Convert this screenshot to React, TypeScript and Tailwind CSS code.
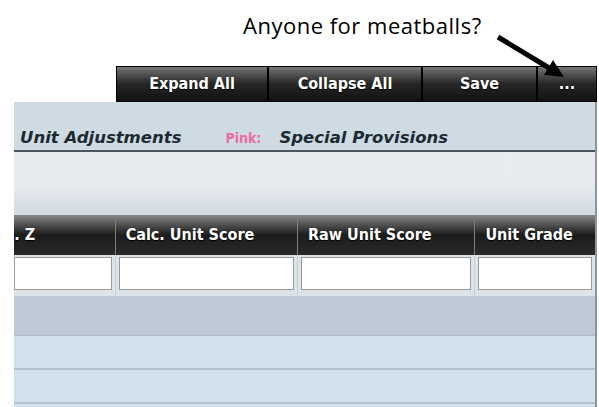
const toolbar = [
  { label: "Expand All", w: "w-[152px]" },
  { label: "Collapse All", w: "w-[154px]" },
  { label: "Save", w: "w-[115px]" },
  { label: "...", w: "w-[60px]" },
];

const columns = [
  { label: "Avg. Z", w: "w-[101px]", clip: true },
  { label: "Calc. Unit Score", w: "w-[183px]" },
  { label: "Raw Unit Score", w: "w-[178px]" },
  { label: "Unit Grade", w: "w-[121px]" },
];

const cond = "font-['DejaVu_Sans_Condensed','DejaVu_Sans',sans-serif] font-stretch-condensed";

function Pointer() {
  // thick black arrow aimed at the overflow button
  return (
    <svg className="pointer-events-none absolute left-0 top-0" width="599" height="100" viewBox="0 0 599 100">
      <line x1="498" y1="37" x2="550" y2="68.5" stroke="#000" strokeWidth="5" />
      <polygon points="564,77 544,75 553,60" fill="#000" />
    </svg>
  );
}

export default function App() {
  return (
    <div className="relative h-[407px] w-[599px] overflow-hidden bg-white">
      <div className="h-[66px] pl-[243px] pt-[9px]">
        <span className="font-['Open_Sans',sans-serif] text-[22px] tracking-[0.5px] text-black">Anyone for meatballs?</span>
      </div>

      <div className="flex h-[36px] pl-[116px]">
        {toolbar.map((b) => (
          <div
            key={b.label}
            className={`${b.w} ${cond} flex items-center justify-center border border-black bg-gradient-to-b from-[#767676] via-[#262626] to-[#121212] text-[16px] font-bold text-white [text-shadow:0_1px_1px_#000]`}
          >
            {b.label}
          </div>
        ))}
      </div>

      <div className="ml-[14px] w-[583px] border-r-2 border-[#8c969c]">
        <div className="flex h-[48px] items-end gap-[44px] bg-[#cedbe2] pl-[6px] font-['DejaVu_Sans',sans-serif] text-[16.5px] font-bold italic leading-[24px] text-[#1d2a33]">
          <span>Unit Adjustments</span>
          <span className="flex items-baseline gap-[18px]">
            <span className={`${cond} text-[14px] not-italic text-[#f06aa6]`}>Pink:</span>
            <span>Special Provisions</span>
          </span>
        </div>
        <div className="h-[2px] bg-[#4c555b]" />
        <div className="h-[63px] bg-gradient-to-b from-[#e8ecef] from-50% to-[#d2dbe1]" />

        <div className="flex h-[40px] bg-gradient-to-b from-[#8a8a8a] via-[#1c1c1c] to-[#2a2a2a]">
          {columns.map((c, i) => (
            <div
              key={c.label}
              className={`${c.w} ${cond} flex items-center overflow-hidden ${i > 0 ? "border-l border-[#7d7d7d] pl-[10px]" : ""} text-[16px] font-bold text-white [text-shadow:0_1px_1px_#000]`}
            >
              <span className={c.clip ? "-ml-[30px]" : ""}>{c.label}</span>
            </div>
          ))}
        </div>

        <div className="flex h-[41px] bg-[#dce4ea]">
          {columns.map((c, i) => (
            <div key={c.label} className={`${c.w} flex pt-[2px] pr-[3px] ${i > 0 ? "border-l border-[#c7d1d8] pl-[3px]" : ""}`}>
              <div className="h-[33px] w-full border border-[#9a9a9a] bg-white" />
            </div>
          ))}
        </div>

        <div className="h-[40px] border-b border-[#aabccb] bg-[#bdcad5]" />
        {[0, 1, 2].map((r) => (
          <div key={r} className="h-[34px] border-b-2 border-[#b0c3d1] bg-[#d2e2ec]" />
        ))}
      </div>

      <Pointer />
    </div>
  );
}
